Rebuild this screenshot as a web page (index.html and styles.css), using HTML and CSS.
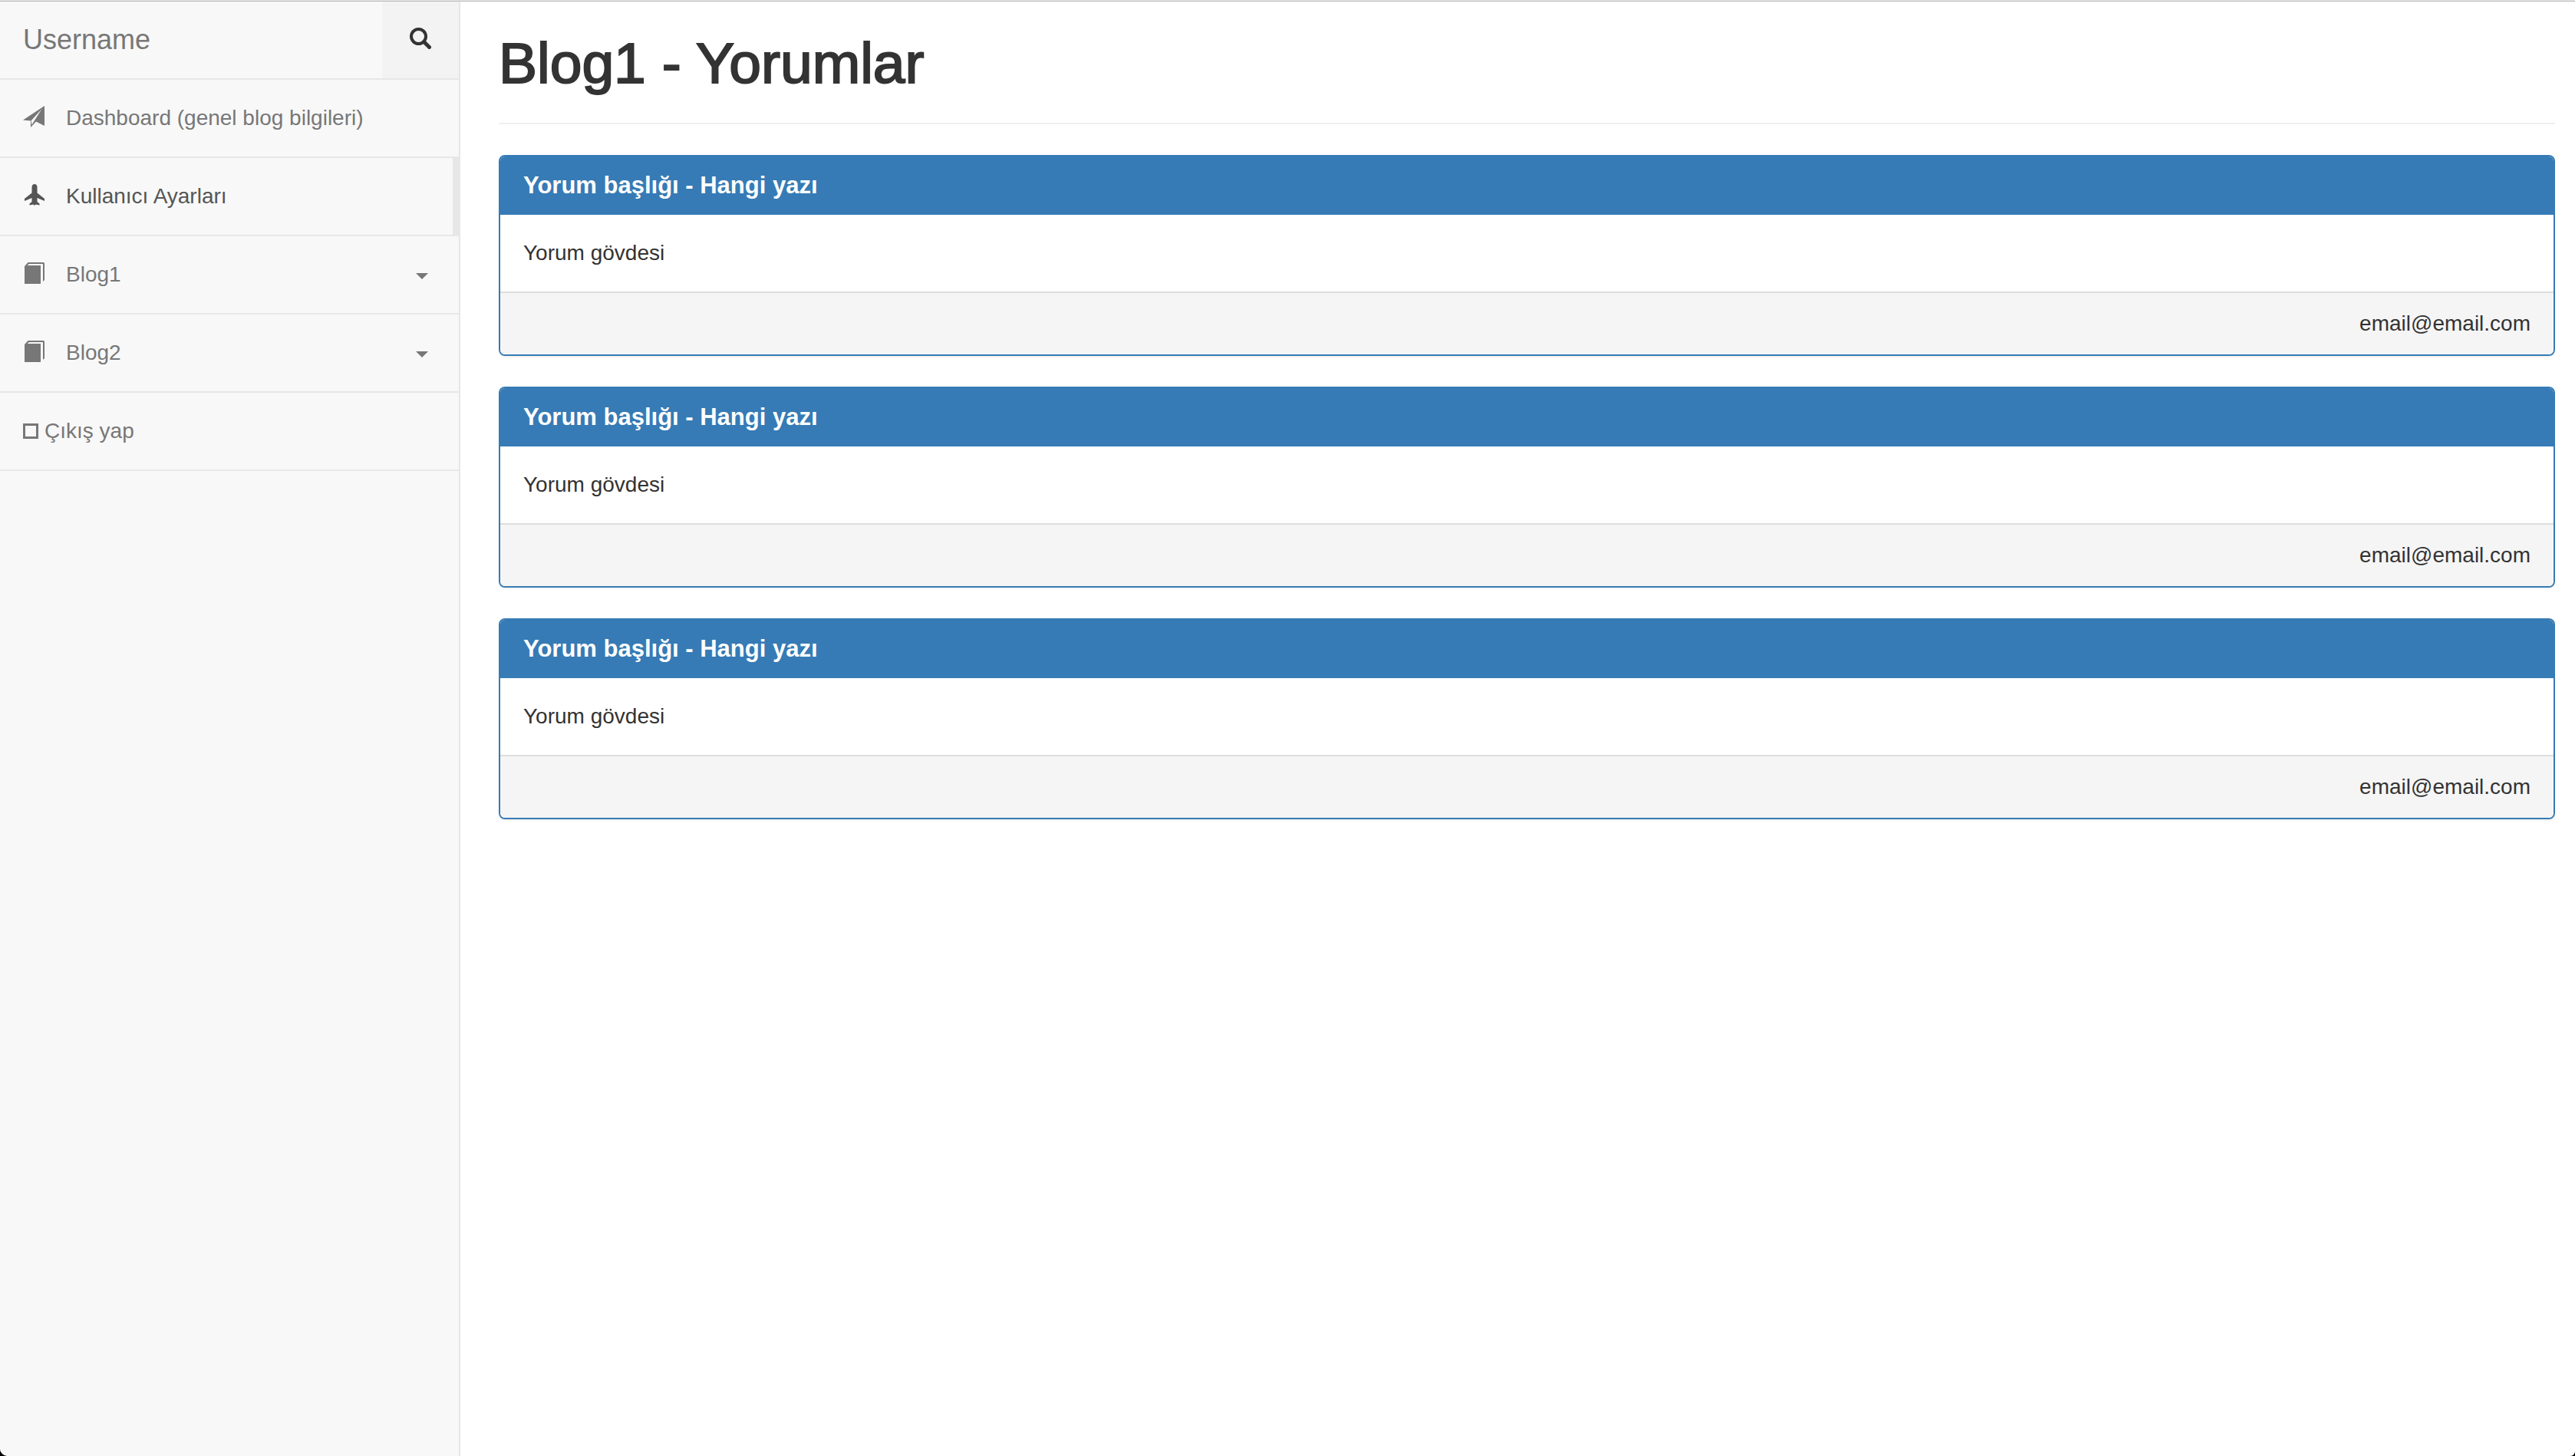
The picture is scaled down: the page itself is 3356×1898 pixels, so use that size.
FILE: index.html
```html
<!DOCTYPE html>
<html lang="tr">
<head>
<meta charset="utf-8">
<title>Blog1 - Yorumlar</title>
<link rel="stylesheet" href="styles.css">
</head>
<body>
<div class="window">
  <nav class="sidebar">
    <form class="search">
      <input class="search-input" type="text" placeholder="Username" aria-label="Username">
      <button class="search-button" type="button" aria-label="Ara">
        <svg class="icon" viewBox="0 0 28 28"><circle cx="11.5" cy="11.5" r="9.5" fill="none" stroke="currentColor" stroke-width="4"/><path d="M18.500 18.500L25.500 25.500" stroke="currentColor" stroke-width="5" stroke-linecap="round"/></svg>
      </button>
    </form>
    <ul class="menu">
      <li><a class="menu-link" href="#">
        <svg class="icon" viewBox="0 0 28 28"><path fill="currentColor" d="M28 0V26L17 20.500L10 28V19.500L0 18.500ZM24.500 4L10.500 19.500L11.500 24.500Z" fill-rule="evenodd"/></svg>
        <span>Dashboard (genel blog bilgileri)</span></a></li>
      <li><a class="menu-link active" href="#">
        <svg class="icon" viewBox="0 0 28 28"><path fill="currentColor" d="M15 0C17 0 18.500 1.500 18.500 4V11.500L28 19V22L18.500 18V23L21.500 25.500V27.500L16.500 26.500L15 28L13.500 26.500L8.500 27.500V25.500L11.500 23V18L2 22V19L11.500 11.500V4C11.500 1.500 13 0 15 0Z"/></svg>
        <span>Kullanıcı Ayarları</span></a></li>
      <li><a class="menu-link" href="#">
        <svg class="icon" viewBox="0 0 28 28"><path fill="currentColor" d="M2 5L6.500 0H26.500Q28 0 28 1.500V23L26 25V2H8L5.500 4H23V28H2Z"/></svg>
        <span>Blog1</span><span class="caret"></span></a></li>
      <li><a class="menu-link" href="#">
        <svg class="icon" viewBox="0 0 28 28"><path fill="currentColor" d="M2 5L6.500 0H26.500Q28 0 28 1.500V23L26 25V2H8L5.500 4H23V28H2Z"/></svg>
        <span>Blog2</span><span class="caret"></span></a></li>
      <li><a class="menu-link compact" href="#"><span class="box"></span><span>Çıkış yap</span></a></li>
    </ul>
  </nav>
  <main class="content">
    <h1 class="page-header">Blog1 - Yorumlar</h1>
    <article class="panel">
      <h2 class="panel-heading">Yorum başlığı - Hangi yazı</h2>
      <p class="panel-body">Yorum gövdesi</p>
      <footer class="panel-footer">email@email.com</footer>
    </article>
    <article class="panel">
      <h2 class="panel-heading">Yorum başlığı - Hangi yazı</h2>
      <p class="panel-body">Yorum gövdesi</p>
      <footer class="panel-footer">email@email.com</footer>
    </article>
    <article class="panel">
      <h2 class="panel-heading">Yorum başlığı - Hangi yazı</h2>
      <p class="panel-body">Yorum gövdesi</p>
      <footer class="panel-footer">email@email.com</footer>
    </article>
  </main>
</div>
</body>
</html>
```

FILE: styles.css
```css
* {
  box-sizing: border-box;
}

html {
  background: #000;
}

body {
  margin: 0;
  border-top: 1px solid #ececec;
  color: #333;
  font: 28px/40px "Liberation Sans", Arial, sans-serif;
}

.window {
  display: flex;
  min-height: calc(100vh - 1px);
  border-top: 1px solid #b4b4b4;
  border-radius: 0 0 6px 10px;
  background: #fff;
  overflow: hidden;
}

.sidebar {
  flex: none;
  width: 600px;
  border-right: 2px solid #e7e7e7;
  background: #f8f8f8;
}

.search {
  display: flex;
  height: 102px;
  border-bottom: 2px solid #e7e7e7;
}

.search-input {
  flex: 1;
  min-width: 0;
  padding: 0 30px;
  border: 0;
  background: none;
  color: #777;
  font: inherit;
  font-size: 36px;
}

.search-input::placeholder {
  color: #777;
  opacity: 1;
}

.search-button {
  display: flex;
  align-items: flex-start;
  width: 100px;
  padding: 34px 36px;
  border: 0;
  background: #f3f3f3;
  color: #333;
}

.icon {
  flex: none;
  display: block;
  width: 28px;
  height: 28px;
}

.menu {
  margin: 0;
  padding: 0;
  list-style: none;
}

.menu-link {
  display: flex;
  gap: 28px;
  padding: 30px;
  border-bottom: 2px solid #e7e7e7;
  color: #777;
  text-decoration: none;
}

.menu-link .icon {
  margin-top: 4px;
}

.menu-link.active {
  border-right: 8px solid #e7e7e7;
  color: #555;
}

.menu-link.compact {
  gap: 8px;
}

.caret {
  align-self: center;
  margin: 4px 10px 0 auto;
  border: 8px solid transparent;
  border-top-color: currentColor;
  border-bottom: 0;
}

.box {
  width: 20px;
  height: 20px;
  margin-top: 10px;
  border: 3px solid currentColor;
}

.content {
  flex: 1;
  padding: 40px 26px 0 50px;
}

.page-header {
  margin: 0 0 40px;
  padding-bottom: 38px;
  border-bottom: 2px solid #eee;
  font-size: 75px;
  font-weight: 500;
  line-height: 80px;
  -webkit-text-stroke: 2px;
}

.panel {
  margin-bottom: 40px;
  border: 2px solid #367bb5;
  border-radius: 8px;
  overflow: hidden;
  box-shadow: 0 2px 2px rgba(0, 0, 0, 0.05);
}

.panel-heading {
  margin: 0;
  padding: 20px 30px;
  background: #367bb5;
  color: #fff;
  font-size: 31px;
  font-weight: bold;
  line-height: 36px;
}

.panel-body {
  margin: 0;
  padding: 30px;
}

.panel-footer {
  padding: 20px 30px;
  border-top: 2px solid #ddd;
  background: #f5f5f5;
  text-align: right;
}
```
